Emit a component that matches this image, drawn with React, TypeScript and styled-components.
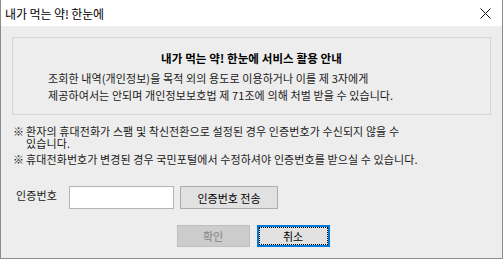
import React, { useState } from "react";
import styled, { createGlobalStyle } from "styled-components";

const GlobalStyle = createGlobalStyle`
  html, body {
    margin: 0;
    padding: 0;
    background: #ffffff;
  }
  body {
    font-family: "Noto Sans CJK KR", "Noto Sans", sans-serif;
  }
`;

// Dialog frame
const Window = styled.div`
  width: 503px;
  height: 259px;
  box-sizing: border-box;
  border: 1px solid #8c8c8c;
  border-top: none;
  display: flex;
  flex-direction: column;
  background: #ededed;
`;

const TitleBar = styled.div`
  height: 26px;
  flex-shrink: 0;
  background: #ffffff;
  display: flex;
  align-items: center;
  justify-content: space-between;
  padding: 0 9px 0 4px;
`;

const TitleText = styled.span`
  font-size: 12px;
  color: #000;
  letter-spacing: -0.1px;
`;

const CloseIcon = styled.svg`
  width: 11px;
  height: 11px;
  margin-right: 2px;
`;

const Body = styled.div`
  flex: 1;
  display: flex;
  flex-direction: column;
  padding: 11px 11px 0 11px;
  font-size: 11px;
  letter-spacing: 0.1px;
  color: #1a1a1a;
`;

// Info group box
const GroupBox = styled.div`
  height: 78px;
  box-sizing: border-box;
  border: 1px solid #d6d6d6;
  display: flex;
  flex-direction: column;
  padding: 13px 0 0 35px;
`;

const GroupTitle = styled.div`
  font-weight: bold;
  font-size: 11.5px;
  text-align: center;
  margin-left: -35px;
  line-height: 14px;
  color: #000;
`;

const GroupText = styled.div`
  margin-top: 5px;
  line-height: 17px;
`;

const Notes = styled.div`
  margin-top: 10px;
  display: flex;
  flex-direction: column;
  gap: 4px;
  padding-left: 1px;
`;

const Note = styled.div`
  display: flex;
  line-height: 12px;
`;

const NoteMark = styled.span`
  width: 13px;
  flex-shrink: 0;
`;

// Phone auth row
const AuthRow = styled.div`
  margin-top: 21px;
  display: flex;
  align-items: center;
  height: 23px;
`;

const AuthLabel = styled.span`
  width: 53px;
  padding-left: 4px;
  margin-top: -6px;
`;

const AuthInput = styled.input`
  width: 105px;
  height: 23px;
  box-sizing: border-box;
  border: 1px solid #b4b4b4;
  background: #fff;
  outline: none;
  font-size: 11px;
  padding: 0 3px;
`;

const SendButton = styled.button`
  margin-left: 6px;
  width: 98px;
  height: 23px;
  box-sizing: border-box;
  border: 1px solid #adadad;
  background: #e1e1e1;
  font-family: inherit;
  font-size: 11px;
  color: #000;
  padding: 0;
`;

const ButtonRow = styled.div`
  margin-top: 16px;
  display: flex;
  justify-content: center;
  gap: 7px;
  padding-left: 3px;
`;

const DialogButton = styled.button<{ $focused?: boolean }>`
  width: 73px;
  height: 22px;
  box-sizing: border-box;
  padding: 0;
  font-family: inherit;
  font-size: 11px;
  border: ${(p) => (p.$focused ? "2px solid #0078d7" : "1px solid #bfbfbf")};
  background: ${(p) => (p.$focused ? "#e1e1e1" : "#cccccc")};
  color: ${(p) => (p.$focused ? "#000" : "#838383")};
  outline: ${(p) => (p.$focused ? "1px dotted #000" : "none")};
  outline-offset: -3px;
`;

export default function App() {
  const [phoneCode, setPhoneCode] = useState("");

  return (
    <>
      <GlobalStyle />
      <Window>
        <TitleBar>
          <TitleText>내가 먹는 약! 한눈에</TitleText>
          <CloseIcon viewBox="0 0 11 11">
            <path d="M0.5 0.5 L10.5 10.5 M10.5 0.5 L0.5 10.5" stroke="#111" strokeWidth="1" />
          </CloseIcon>
        </TitleBar>
        <Body>
          <GroupBox>
            <GroupTitle>내가 먹는 약! 한눈에 서비스 활용 안내</GroupTitle>
            <GroupText>
              조회한 내역(개인정보)을 목적 외의 용도로 이용하거나 이를 제 3자에게
              <br />
              제공하여서는 안되며 개인정보보호법 제 71조에 의해 처벌 받을 수 있습니다.
            </GroupText>
          </GroupBox>
          <Notes>
            <Note>
              <NoteMark>※</NoteMark>
              <span>
                환자의 휴대전화가 스팸 및 착신전환으로 설정된 경우 인증번호가 수신되지 않을 수
                <br />
                있습니다.
              </span>
            </Note>
            <Note>
              <NoteMark>※</NoteMark>
              <span>휴대전화번호가 변경된 경우 국민포털에서 수정하셔야 인증번호를 받으실 수 있습니다.</span>
            </Note>
          </Notes>
          <AuthRow>
            <AuthLabel>인증번호</AuthLabel>
            <AuthInput value={phoneCode} onChange={(e) => setPhoneCode(e.target.value)} />
            <SendButton>인증번호 전송</SendButton>
          </AuthRow>
          <ButtonRow>
            <DialogButton disabled>확인</DialogButton>
            <DialogButton $focused>취소</DialogButton>
          </ButtonRow>
        </Body>
      </Window>
    </>
  );
}
